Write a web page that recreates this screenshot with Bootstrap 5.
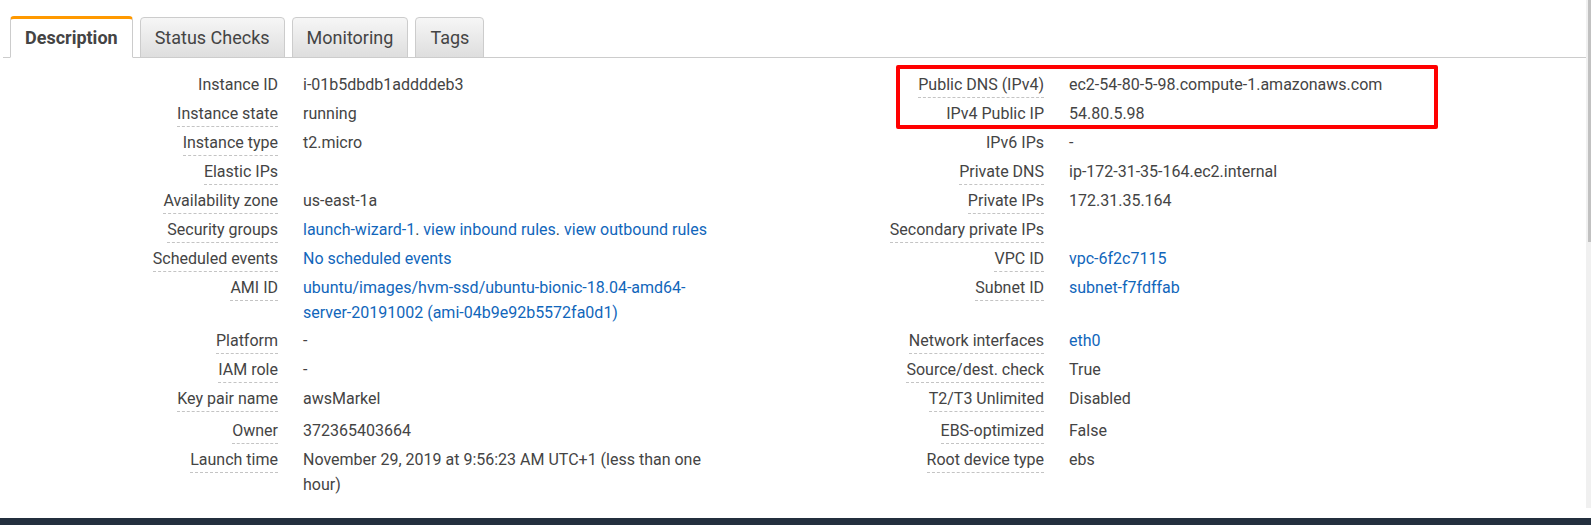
<!DOCTYPE html>
<html lang="en">
<head>
<meta charset="utf-8">
<meta name="viewport" content="width=device-width, initial-scale=1">
<title>Instance details</title>
<link href="https://cdn.jsdelivr.net/npm/bootstrap@5.3.0/dist/css/bootstrap.min.css" rel="stylesheet">
<style>
  body { font-family: Roboto, "Liberation Sans", sans-serif; font-size: 16px; line-height: 25px; color: #444; background: #fff; }
  a { color: #1166bb; text-decoration: none; }
  a:hover { text-decoration: underline; }

  .nav-tabs { --bs-nav-tabs-border-color: #ccc; gap: 7px; padding: 16px 7px 0; margin-left: 3px; }
  .nav-tabs .nav-item { display: flex; align-items: flex-end; }
  .nav-tabs .nav-link {
    height: 41px; padding: 0 14px; font-size: 18px; line-height: 40px; color: #444;
    border: 1px solid #ccc; border-radius: 4px 4px 0 0;
    background: linear-gradient(#f6f6f6, #dedede);
  }
  .nav-tabs .nav-link.active {
    height: 42px; line-height: 38px; font-weight: 700; color: #444;
    background: #fff; border-color: #ff9900 #ccc #fff; border-top-width: 3px;
  }

  .details { padding: 14px 0 5px 3px; }
  .details dl {
    display: grid; grid-template-columns: 275fr 441fr 275fr 517fr;
    column-gap: 25px; row-gap: 3px; margin: 0 0 6px;
  }
  .details dt { font-weight: 400; text-align: right; min-height: 26px; }
  .details dt span { display: inline-block; vertical-align: top; }
  .details dt .hint { border-bottom: 1px dashed #c4c4c4; }
  .details dd { margin: 0; padding-right: 12px; }
  .highlight { left: 56.5%; width: 34.2%; top: 7px; height: 64px; border: 4px solid #f00; border-radius: 2px; pointer-events: none; }

  .scroll-track { width: 5px; background: #f0f0f0; padding-left: 2px; }
  .scroll-thumb { height: 47.6%; background: #c1c1c1; }
  .page-footer { height: 7px; background: #232f3e; }
</style>
</head>
<body>
<div class="d-flex flex-column min-vh-100">
  <main class="d-flex">
    <div class="flex-grow-1">
      <ul class="nav nav-tabs" role="tablist">
        <li class="nav-item" role="presentation"><button class="nav-link active" type="button" role="tab" aria-selected="true">Description</button></li>
        <li class="nav-item" role="presentation"><button class="nav-link" type="button" role="tab" aria-selected="false">Status Checks</button></li>
        <li class="nav-item" role="presentation"><button class="nav-link" type="button" role="tab" aria-selected="false">Monitoring</button></li>
        <li class="nav-item" role="presentation"><button class="nav-link" type="button" role="tab" aria-selected="false">Tags</button></li>
      </ul>
      <div class="details position-relative">
        <dl>
          <dt><span>Instance ID</span></dt><dd>i-01b5dbdb1addddeb3</dd>
          <dt><span class="hint">Public DNS (IPv4)</span></dt><dd>ec2-54-80-5-98.compute-1.amazonaws.com</dd>
          <dt><span class="hint">Instance state</span></dt><dd>running</dd>
          <dt><span>IPv4 Public IP</span></dt><dd>54.80.5.98</dd>
          <dt><span class="hint">Instance type</span></dt><dd>t2.micro</dd>
          <dt><span>IPv6 IPs</span></dt><dd>-</dd>
          <dt><span class="hint">Elastic IPs</span></dt><dd></dd>
          <dt><span class="hint">Private DNS</span></dt><dd>ip-172-31-35-164.ec2.internal</dd>
          <dt><span class="hint">Availability zone</span></dt><dd>us-east-1a</dd>
          <dt><span class="hint">Private IPs</span></dt><dd>172.31.35.164</dd>
          <dt><span class="hint">Security groups</span></dt><dd><a href="#">launch-wizard-1</a>. <a href="#">view inbound rules</a>. <a href="#">view outbound rules</a></dd>
          <dt><span class="hint">Secondary private IPs</span></dt><dd></dd>
          <dt><span class="hint">Scheduled events</span></dt><dd><a href="#">No scheduled events</a></dd>
          <dt><span class="hint">VPC ID</span></dt><dd><a href="#">vpc-6f2c7115</a></dd>
          <dt><span class="hint">AMI ID</span></dt><dd><a href="#">ubuntu/images/hvm-ssd/ubuntu-bionic-18.04-amd64-server-20191002 (ami-04b9e92b5572fa0d1)</a></dd>
          <dt><span class="hint">Subnet ID</span></dt><dd><a href="#">subnet-f7fdffab</a></dd>
          <dt><span class="hint">Platform</span></dt><dd>-</dd>
          <dt><span class="hint">Network interfaces</span></dt><dd><a href="#">eth0</a></dd>
          <dt><span class="hint">IAM role</span></dt><dd>-</dd>
          <dt><span class="hint">Source/dest. check</span></dt><dd>True</dd>
          <dt><span class="hint">Key pair name</span></dt><dd>awsMarkel</dd>
          <dt><span class="hint">T2/T3 Unlimited</span></dt><dd>Disabled</dd>
        </dl>
        <dl>
          <dt><span class="hint">Owner</span></dt><dd>372365403664</dd>
          <dt><span class="hint">EBS-optimized</span></dt><dd>False</dd>
          <dt><span class="hint">Launch time</span></dt><dd>November 29, 2019 at 9:56:23 AM UTC+1 (less than one hour)</dd>
          <dt><span class="hint">Root device type</span></dt><dd>ebs</dd>
        </dl>
        <div class="highlight position-absolute"></div>
      </div>
    </div>
    <div class="scroll-track flex-shrink-0" aria-hidden="true"><div class="scroll-thumb"></div></div>
  </main>
  <footer class="page-footer mt-auto"></footer>
</div>
<script src="https://cdn.jsdelivr.net/npm/bootstrap@5.3.0/dist/js/bootstrap.bundle.min.js"></script>
</body>
</html>
